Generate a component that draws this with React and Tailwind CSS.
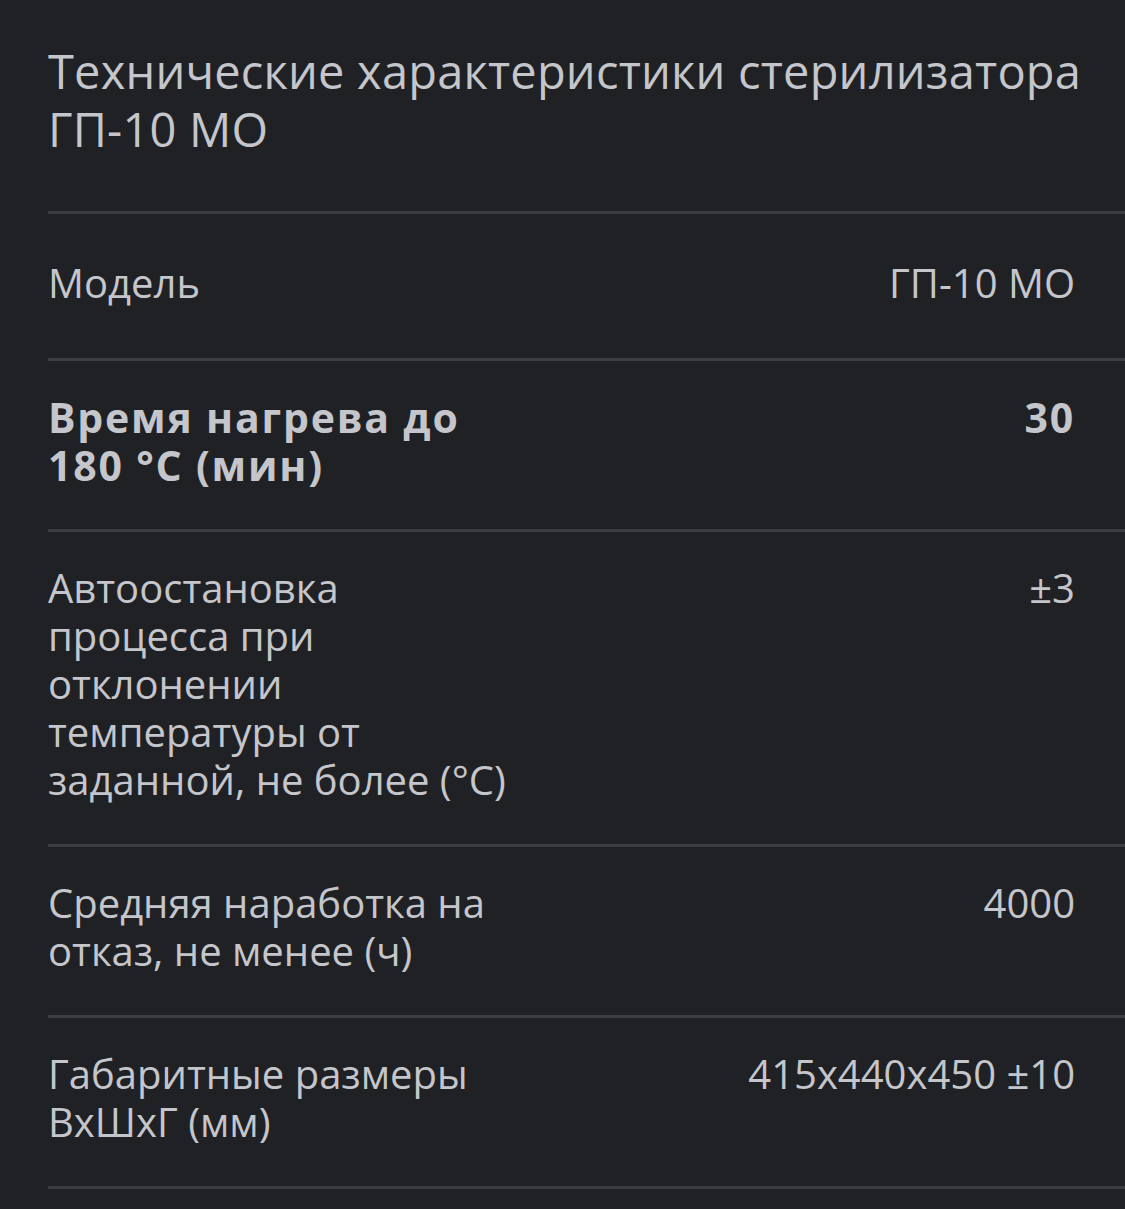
import React from 'react';

const specs = [
  { label: 'Модель', value: 'ГП-10 МО', pad: 'pt-[45px] pb-[51px]' },
  { label: 'Время нагрева до 180 °C (мин)', value: '30', bold: true },
  {
    label: 'Автоостановка процесса при отклонении температуры от заданной, не более (°C)',
    value: '±3',
  },
  { label: 'Средняя наработка на отказ, не менее (ч)', value: '4000' },
  { label: 'Габаритные размеры ВхШхГ (мм)', value: '415x440x450 ±10' },
];

const SpecRow = ({ label, value, bold, pad }) => (
  <div className="border-t-[3px] border-[#3c3e44]">
    <div
      className={`grid grid-cols-[482px_1fr] pr-[50px] ${pad || 'pt-8 pb-10'} leading-[48px] ${
        bold ? 'text-[41px] font-bold tracking-[1.8px]' : 'text-[40px] font-normal'
      }`}
    >
      <div>{label}</div>
      <div className="text-right">{value}</div>
    </div>
  </div>
);

const App = () => {
  return (
    <div
      className="min-h-screen bg-[#202125] text-[#c4c6cb] pl-12 pt-[42px]"
      style={{ fontFamily: '"Open Sans", "Noto Sans", sans-serif' }}
    >
      <h2 className="text-[47px] leading-[58px] font-normal tracking-[0.2px] pr-8 mb-[53px]">
        Технические характеристики стерилизатора ГП-10 МО
      </h2>
      <div>
        {specs.map((item, index) => (
          <SpecRow key={index} {...item} />
        ))}
        <div className="border-t-[3px] border-[#3c3e44] h-6" />
      </div>
    </div>
  );
};

export default App;
